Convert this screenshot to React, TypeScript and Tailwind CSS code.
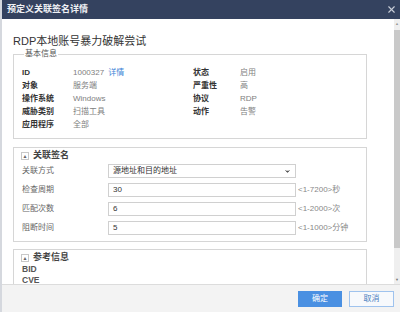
import { ChevronDown, X } from "lucide-react";

const basicRows = [
  ["ID", "1000327", "状态", "启用"],
  ["对象", "服务端", "严重性", "高"],
  ["操作系统", "Windows", "协议", "RDP"],
  ["威胁类别", "扫描工具", "动作", "告警"],
  ["应用程序", "全部", "", ""],
];

const fields = [
  { label: "检查周期", value: "30", hint: "<1-7200>秒" },
  { label: "匹配次数", value: "6", hint: "<1-2000>次" },
  { label: "阻断时间", value: "5", hint: "<1-1000>分钟" },
];

function Toggle({ title }: { title: string }) {
  return (
    <div className="flex h-[12px] items-center gap-[4px] pl-[7px]">
      <span className="flex h-[8px] w-[8px] items-center justify-center border border-[#c8c8c8] text-[5px] leading-none text-[#666]">
        ▲
      </span>
      <span className="text-[9px] font-bold text-[#444]">{title}</span>
    </div>
  );
}

export default function App() {
  return (
    <div className="flex h-[312px] w-[400px] flex-col overflow-hidden border-l-2 border-[#d5d8de] bg-white font-['Liberation_Sans','Noto_Sans_CJK_SC',sans-serif] text-[8px] text-[#333]">
      <div className="flex h-[19px] shrink-0 items-center justify-between bg-[#34425f] pl-[5px] pr-[3px]">
        <span className="text-[9px] font-bold text-[#eef0f4]">预定义关联签名详情</span>
        <X className="h-[11px] w-[11px] text-[#c7ccd6]" strokeWidth={2.5} />
      </div>

      <div className="flex min-h-0 flex-1">
        <div className="min-w-0 flex-1 overflow-hidden px-[11px]">
          <h1 className="pt-[15px] text-[11px] leading-[15px] text-[#333]">RDP本地账号暴力破解尝试</h1>

          <fieldset className="mt-[0px] w-[354px] border border-[#d6d6d6] px-[8px] pb-[7px] pt-[7px]">
            <legend className="ml-[2px] px-[1px] text-[8px] leading-[10px] text-[#555]">基本信息</legend>
            <div className="grid grid-cols-[51px_120px_47px_1fr]">
              {basicRows.map(([a, b, c, d]) => (
                <div key={a} className="contents">
                  <span className="h-[13px] leading-[13px] font-bold text-[#333]">{a}</span>
                  <span className="leading-[13px] text-[#808080]">
                    {b}
                    {a === "ID" && <span className="ml-[4px] text-[#3b82d6]">详情</span>}
                  </span>
                  <span className="leading-[13px] font-bold text-[#333]">{c}</span>
                  <span className="leading-[13px] text-[#808080]">{d}</span>
                </div>
              ))}
            </div>
          </fieldset>

          <div className="mt-[8px] w-[354px] border border-[#d6d6d6] pb-[6px] pt-[2px]">
            <Toggle title="关联签名" />
            <div className="mt-[2px] flex flex-col gap-[5px] pl-[8px]">
              <div className="flex items-center">
                <span className="w-[86px] text-[#666]">关联方式</span>
                <div className="flex h-[14px] w-[188px] items-center justify-between border border-[#d0d0d0] pl-[4px] pr-[4px]">
                  <span className="text-[#333]">源地址和目的地址</span>
                  <ChevronDown className="h-[7px] w-[7px] text-[#555]" fill="#555" strokeWidth={3} />
                </div>
              </div>
              {fields.map((f) => (
                <div key={f.label} className="flex items-center">
                  <span className="w-[86px] text-[#666]">{f.label}</span>
                  <div className="flex h-[14px] w-[188px] items-center border border-[#d0d0d0] pl-[4px] text-[#333]">
                    {f.value}
                  </div>
                  <span className="ml-[2px] text-[#888]">{f.hint}</span>
                </div>
              ))}
            </div>
          </div>

          <div className="mt-[7px] h-[60px] w-[354px] border border-[#d6d6d6] pt-[2px]">
            <Toggle title="参考信息" />
            <div className="pl-[8px] text-[8.5px] font-bold leading-[11px] text-[#555]">
              <div>BID</div>
              <div>CVE</div>
            </div>
          </div>
        </div>

        <div className="flex w-[6px] shrink-0 flex-col items-center bg-[#efefef] py-[2px]">
          <span className="text-[4px] leading-[5px] text-[#999]">▲</span>
          <div className="mt-[4px] h-[218px] w-[6px] bg-[#c9c9c9]" />
          <div className="flex-1" />
          <span className="text-[4px] leading-[5px] text-[#777]">▼</span>
        </div>
      </div>

      <div className="flex h-[28px] shrink-0 items-center justify-end gap-[7px] border-t border-[#dcdcdc] bg-[#f3f3f3] pr-[6px]">
        <button className="h-[16px] w-[44px] bg-[#4a90e2] text-[8px] text-white">确定</button>
        <button className="h-[16px] w-[45px] border border-[#9fc3ee] bg-[#f7f9fc] text-[8px] text-[#4a7fc0]">取消</button>
      </div>
    </div>
  );
}
